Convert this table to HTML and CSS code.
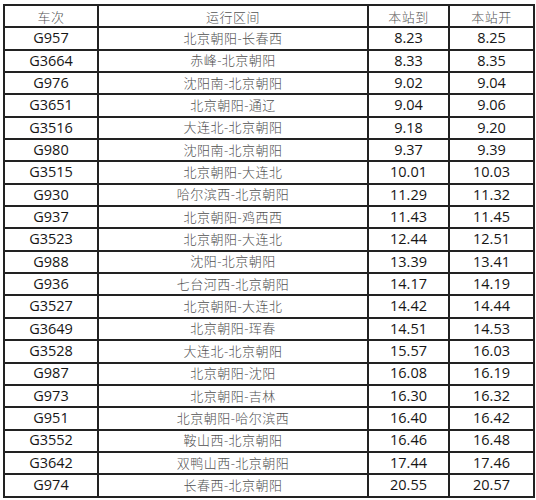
FILE: index.html
```html
<!DOCTYPE html>
<html lang="zh">
<head>
<meta charset="utf-8">
<link rel="stylesheet" href="styles.css">
</head>
<body>
<table class="sched">
<colgroup><col class="c1"><col class="c2"><col class="c3"><col class="c4"></colgroup>
<thead>
<tr><th>车次</th><th>运行区间</th><th>本站到</th><th>本站开</th></tr>
</thead>
<tbody>
<tr><td>G957</td><td class="zh">北京朝阳-长春西</td><td>8.23</td><td>8.25</td></tr>
<tr><td>G3664</td><td class="zh">赤峰-北京朝阳</td><td>8.33</td><td>8.35</td></tr>
<tr><td>G976</td><td class="zh">沈阳南-北京朝阳</td><td>9.02</td><td>9.04</td></tr>
<tr><td>G3651</td><td class="zh">北京朝阳-通辽</td><td>9.04</td><td>9.06</td></tr>
<tr><td>G3516</td><td class="zh">大连北-北京朝阳</td><td>9.18</td><td>9.20</td></tr>
<tr><td>G980</td><td class="zh">沈阳南-北京朝阳</td><td>9.37</td><td>9.39</td></tr>
<tr><td>G3515</td><td class="zh">北京朝阳-大连北</td><td>10.01</td><td>10.03</td></tr>
<tr><td>G930</td><td class="zh">哈尔滨西-北京朝阳</td><td>11.29</td><td>11.32</td></tr>
<tr><td>G937</td><td class="zh">北京朝阳-鸡西西</td><td>11.43</td><td>11.45</td></tr>
<tr><td>G3523</td><td class="zh">北京朝阳-大连北</td><td>12.44</td><td>12.51</td></tr>
<tr><td>G988</td><td class="zh">沈阳-北京朝阳</td><td>13.39</td><td>13.41</td></tr>
<tr><td>G936</td><td class="zh">七台河西-北京朝阳</td><td>14.17</td><td>14.19</td></tr>
<tr><td>G3527</td><td class="zh">北京朝阳-大连北</td><td>14.42</td><td>14.44</td></tr>
<tr><td>G3649</td><td class="zh">北京朝阳-珲春</td><td>14.51</td><td>14.53</td></tr>
<tr><td>G3528</td><td class="zh">大连北-北京朝阳</td><td>15.57</td><td>16.03</td></tr>
<tr><td>G987</td><td class="zh">北京朝阳-沈阳</td><td>16.08</td><td>16.19</td></tr>
<tr><td>G973</td><td class="zh">北京朝阳-吉林</td><td>16.30</td><td>16.32</td></tr>
<tr><td>G951</td><td class="zh">北京朝阳-哈尔滨西</td><td>16.40</td><td>16.42</td></tr>
<tr><td>G3552</td><td class="zh">鞍山西-北京朝阳</td><td>16.46</td><td>16.48</td></tr>
<tr><td>G3642</td><td class="zh">双鸭山西-北京朝阳</td><td>17.44</td><td>17.46</td></tr>
<tr><td>G974</td><td class="zh">长春西-北京朝阳</td><td>20.55</td><td>20.57</td></tr>
</tbody>
</table>
</body>
</html>
```

FILE: styles.css
```css
html, body {
  margin: 0;
  padding: 0;
  background: #ffffff;
}
body {
  padding: 4px 0 0 3px;
}
.sched {
  border-collapse: collapse;
  table-layout: fixed;
  width: 530px;
  font-family: "Open Sans", "Noto Sans CJK SC", sans-serif;
  font-size: 14.5px;
  color: #161616;
}
.c1 { width: 94px; }
.c2 { width: 270px; }
.c3 { width: 81px; }
.c4 { width: 85px; }
.sched th,
.sched td {
  border: 2px solid #222222;
  height: 22.35px;
  padding: 0;
  text-align: center;
  vertical-align: middle;
  line-height: 1;
  box-sizing: border-box;
}
.sched th {
  font-family: "Noto Sans CJK SC", sans-serif;
  font-weight: 300;
  font-size: 13px;
  color: #555555;
  letter-spacing: 0.5px;
}
.sched td.zh {
  font-family: "Open Sans", "Noto Sans CJK SC", sans-serif;
  font-weight: 300;
  font-size: 13px;
  color: #505050;
  letter-spacing: 0.5px;
}
```
